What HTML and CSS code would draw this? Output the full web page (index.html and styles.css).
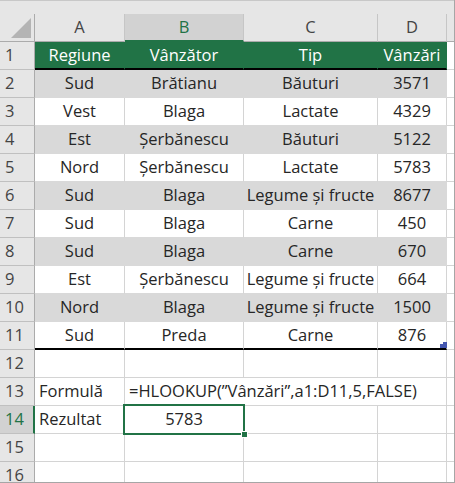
FILE: index.html
```html
<!DOCTYPE html>
<html lang="ro">
<head>
    <meta charset="UTF-8">
    <meta name="viewport" content="width=device-width, initial-scale=1.0">
    <title>HLOOKUP</title>
    <link rel="stylesheet" href="styles.css">
</head>
<body>
    <div class="window">
        <!-- Strip above the grid -->
        <div class="topbar"></div>

        <!-- Sheet -->
        <div class="sheet">
            <!-- Column headers -->
            <div class="cell corner">
                <svg width="21" height="21" viewBox="0 0 21 21"><polygon points="0,20 20,20 20,0" fill="#b4b4b4"/></svg>
            </div>
            <div class="cell col-head">A</div>
            <div class="cell col-head active">B</div>
            <div class="cell col-head">C</div>
            <div class="cell col-head">D</div>
            <div class="cell col-head col-e"></div>

            <!-- Row 1 -->
            <div class="cell row-head">1</div>
            <div class="cell hdr">Regiune</div>
            <div class="cell hdr">Vânzător</div>
            <div class="cell hdr">Tip</div>
            <div class="cell hdr">Vânzări</div>
            <div class="cell col-e"></div>

            <!-- Row 2 -->
            <div class="cell row-head">2</div>
            <div class="cell band">Sud</div>
            <div class="cell band">Brătianu</div>
            <div class="cell band">Băuturi</div>
            <div class="cell band">3571</div>
            <div class="cell col-e"></div>

            <!-- Row 3 -->
            <div class="cell row-head">3</div>
            <div class="cell tbl">Vest</div>
            <div class="cell tbl">Blaga</div>
            <div class="cell tbl">Lactate</div>
            <div class="cell tbl">4329</div>
            <div class="cell col-e"></div>

            <!-- Row 4 -->
            <div class="cell row-head">4</div>
            <div class="cell band">Est</div>
            <div class="cell band">Șerbănescu</div>
            <div class="cell band">Băuturi</div>
            <div class="cell band">5122</div>
            <div class="cell col-e"></div>

            <!-- Row 5 -->
            <div class="cell row-head">5</div>
            <div class="cell tbl">Nord</div>
            <div class="cell tbl">Șerbănescu</div>
            <div class="cell tbl">Lactate</div>
            <div class="cell tbl">5783</div>
            <div class="cell col-e"></div>

            <!-- Row 6 -->
            <div class="cell row-head">6</div>
            <div class="cell band">Sud</div>
            <div class="cell band">Blaga</div>
            <div class="cell band">Legume și fructe</div>
            <div class="cell band">8677</div>
            <div class="cell col-e"></div>

            <!-- Row 7 -->
            <div class="cell row-head">7</div>
            <div class="cell tbl">Sud</div>
            <div class="cell tbl">Blaga</div>
            <div class="cell tbl">Carne</div>
            <div class="cell tbl">450</div>
            <div class="cell col-e"></div>

            <!-- Row 8 -->
            <div class="cell row-head">8</div>
            <div class="cell band">Sud</div>
            <div class="cell band">Blaga</div>
            <div class="cell band">Carne</div>
            <div class="cell band">670</div>
            <div class="cell col-e"></div>

            <!-- Row 9 -->
            <div class="cell row-head">9</div>
            <div class="cell tbl">Est</div>
            <div class="cell tbl">Șerbănescu</div>
            <div class="cell tbl">Legume și fructe</div>
            <div class="cell tbl">664</div>
            <div class="cell col-e"></div>

            <!-- Row 10 -->
            <div class="cell row-head">10</div>
            <div class="cell band">Nord</div>
            <div class="cell band">Blaga</div>
            <div class="cell band">Legume și fructe</div>
            <div class="cell band">1500</div>
            <div class="cell col-e"></div>

            <!-- Row 11 -->
            <div class="cell row-head">11</div>
            <div class="cell last">Sud</div>
            <div class="cell last">Preda</div>
            <div class="cell last">Carne</div>
            <div class="cell last resize-cell">876
                <svg class="resize" width="7" height="6" viewBox="0 0 7 6"><polygon points="3,0 7,0 7,6 0,6 0,2 3,2" fill="#4457b0"/></svg>
            </div>
            <div class="cell col-e"></div>

            <!-- Row 12 -->
            <div class="cell row-head">12</div>
            <div class="cell"></div>
            <div class="cell"></div>
            <div class="cell"></div>
            <div class="cell"></div>
            <div class="cell col-e"></div>

            <!-- Row 13 -->
            <div class="cell row-head">13</div>
            <div class="cell left">Formulă</div>
            <div class="cell left formula">=HLOOKUP(”Vânzări”,a1:D11,5,FALSE)</div>
            <div class="cell col-e"></div>

            <!-- Row 14 -->
            <div class="cell row-head active">14</div>
            <div class="cell left">Rezultat</div>
            <div class="cell selected">5783
                <span class="sel-box"></span>
                <span class="sel-handle"></span>
            </div>
            <div class="cell"></div>
            <div class="cell"></div>
            <div class="cell col-e"></div>

            <!-- Row 15 -->
            <div class="cell row-head">15</div>
            <div class="cell"></div>
            <div class="cell"></div>
            <div class="cell"></div>
            <div class="cell"></div>
            <div class="cell col-e"></div>

            <!-- Row 16 -->
            <div class="cell row-head">16</div>
            <div class="cell"></div>
            <div class="cell"></div>
            <div class="cell"></div>
            <div class="cell"></div>
            <div class="cell col-e"></div>
        </div>
    </div>
</body>
</html>
```

FILE: styles.css
```css
* {
    margin: 0;
    padding: 0;
    box-sizing: border-box;
}

body {
    font-family: 'Open Sans', 'Noto Sans', sans-serif;
    background-color: #ffffff;
    width: 455px;
    height: 483px;
    overflow: hidden;
}

/* Window frame */
.window {
    width: 455px;
    height: 483px;
    border-right: 1px solid #a6a6a6;
    border-bottom: 1px solid #a6a6a6;
    background-color: #ffffff;
    overflow: hidden;
}

.topbar {
    height: 14px;
    background-color: #e6e6e6;
    border-top: 1px solid #c8c8c8;
}

/* Sheet grid */
.sheet {
    display: grid;
    grid-template-columns: 35px 90px 119px 134px 69px 7px;
    grid-auto-rows: 28px;
    font-size: 16.5px;
    color: #262626;
}

.cell {
    border-right: 1px solid #d4d4d4;
    border-bottom: 1px solid #d4d4d4;
    display: flex;
    align-items: center;
    justify-content: center;
    white-space: nowrap;
    line-height: 1;
}

.col-e {
    border-right: none;
}

/* Headers */
.corner {
    background-color: #e6e6e6;
    border-right: 1px solid #ababab;
    border-bottom: 1px solid #ababab;
    align-items: flex-end;
    justify-content: flex-end;
    padding: 0 2px 2px 0;
}

.col-head {
    background-color: #e6e6e6;
    border-right: 1px solid #c6c6c6;
    border-bottom: 1px solid #ababab;
    color: #444444;
}

.col-head.col-e {
    border-right: none;
}

.col-head.active {
    background-color: #d2d2d2;
    color: #217346;
    border-bottom: 2px solid #217346;
}

.row-head {
    background-color: #e6e6e6;
    border-right: 1px solid #ababab;
    border-bottom: 1px solid #c0c0c0;
    color: #444444;
    justify-content: flex-start;
    padding-left: 5px;
}

.row-head.active {
    background-color: #d2d2d2;
    color: #217346;
    border-right: 2px solid #217346;
}

/* Table */
.hdr {
    background-color: #217346;
    color: #ffffff;
    border-right-color: #217346;
    border-bottom: 2px solid #000000;
}

.band {
    background-color: #d9d9d9;
    border-right-color: #d9d9d9;
    border-bottom-color: #d9d9d9;
}

.tbl {
    border-bottom-color: #d9d9d9;
}

.last {
    border-bottom: 2px solid #000000;
}

.resize-cell {
    position: relative;
}

.resize {
    position: absolute;
    right: -1px;
    bottom: 0;
}

/* Formula rows */
.left {
    justify-content: flex-start;
    padding-left: 4px;
}

.formula {
    grid-column: span 3;
}

.selected {
    position: relative;
}

.sel-box {
    position: absolute;
    top: -2px;
    left: -2px;
    right: -2px;
    bottom: -2px;
    border: 2px solid #217346;
    z-index: 2;
}

.sel-handle {
    position: absolute;
    right: -5px;
    bottom: -5px;
    width: 7px;
    height: 7px;
    background-color: #217346;
    border: 1px solid #ffffff;
    z-index: 3;
}
```
